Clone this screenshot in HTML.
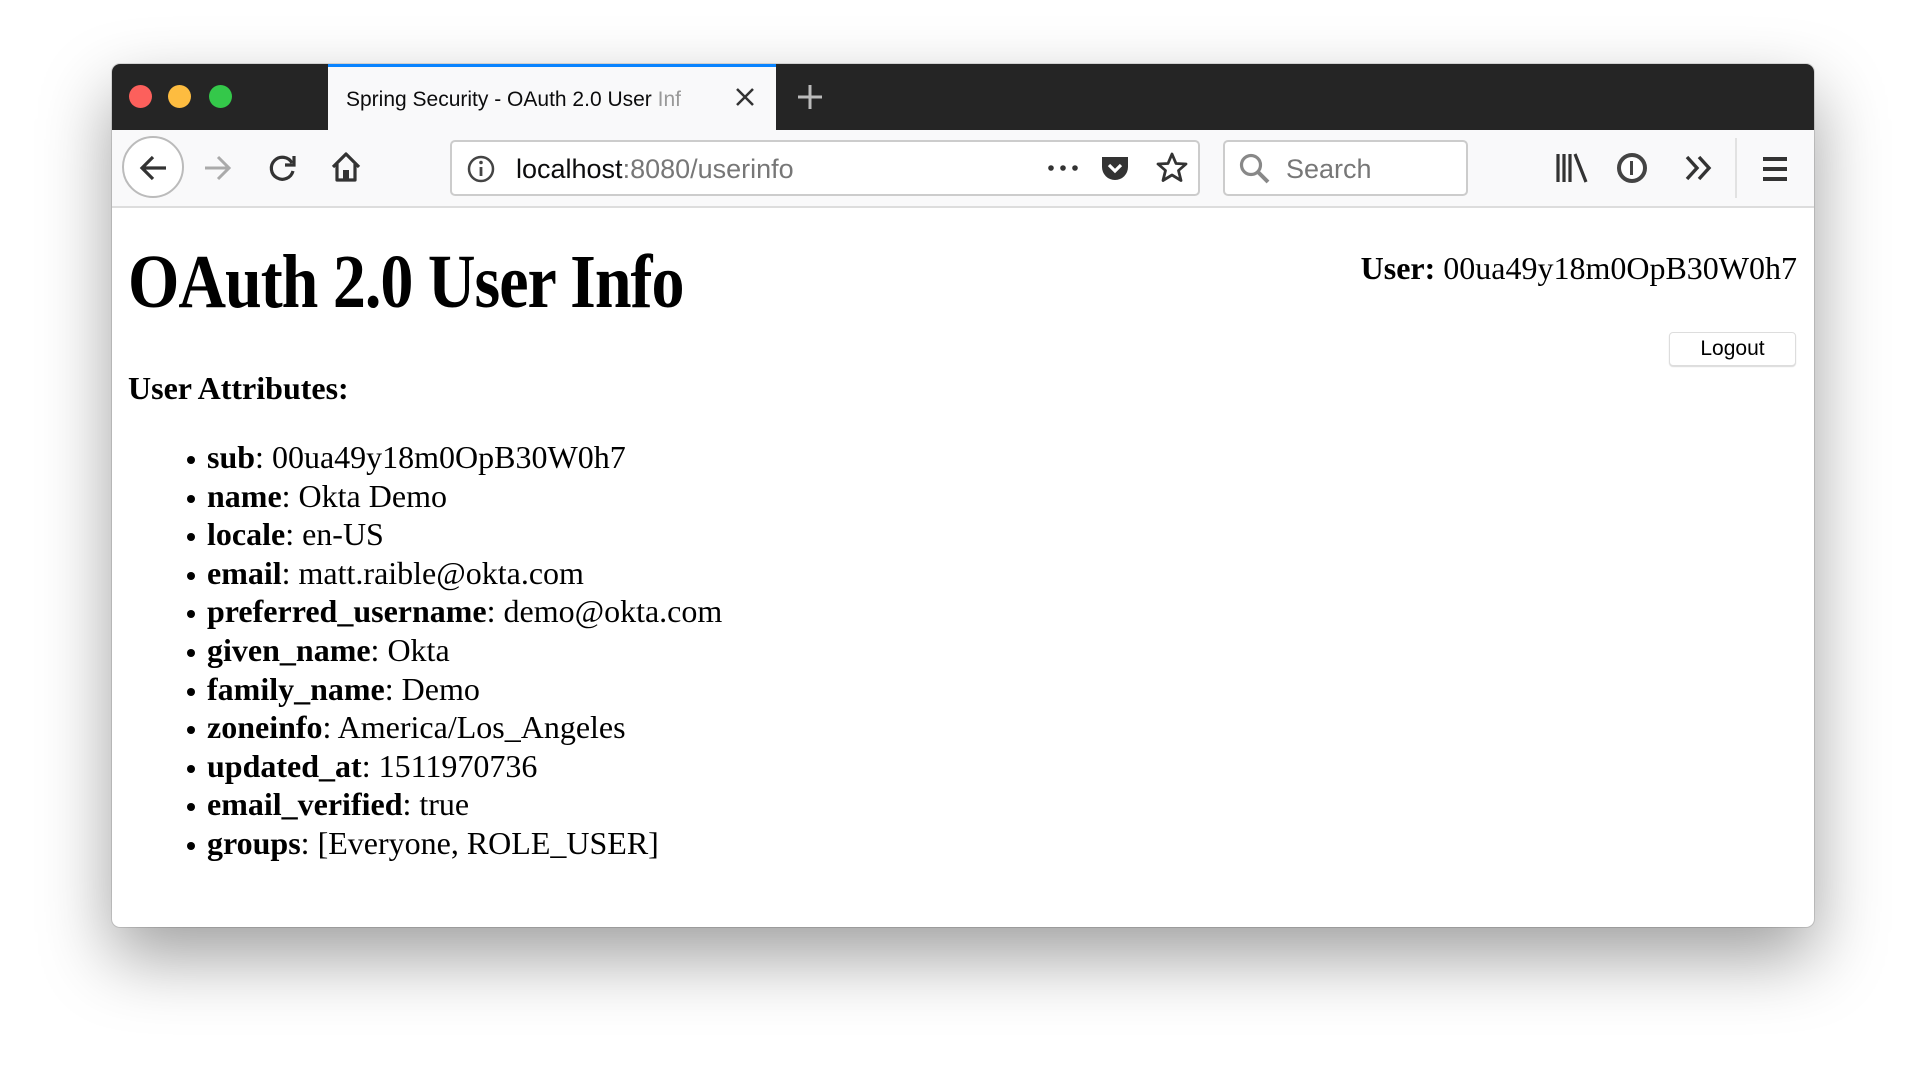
<!DOCTYPE html>
<html><head><meta charset="utf-8"><style>
html,body{margin:0;padding:0;width:1926px;height:1088px;background:#fff;overflow:hidden;position:relative;font-family:"Liberation Sans",sans-serif}
.win{position:absolute;left:112px;top:64px;width:1702px;height:863px;border-radius:8px;background:#fff;box-shadow:0 30px 70px rgba(0,0,0,.38),0 0 0 1px rgba(0,0,0,.12);overflow:hidden}
.title{position:absolute;left:0;top:0;width:100%;height:66px;background:#252525}
.dot{position:absolute;top:21px;width:23px;height:23px;border-radius:50%}
.tab{position:absolute;left:216px;top:0;width:448px;height:66px;background:#f9f9fa;border-top:3px solid #0a84ff;box-sizing:border-box}
.tb{position:absolute;left:0;top:66px;width:100%;height:76px;background:#f9f9fa;border-bottom:2px solid #ddd}
.abs{position:absolute}
.serif{font-family:"Liberation Serif",serif;color:#000}
.li{position:absolute;left:95px;font-size:32px;line-height:38px;white-space:nowrap;font-family:"Liberation Serif",serif}
.li:before{content:"";position:absolute;left:-20px;top:18px;width:8px;height:8px;border-radius:50%;background:#000}
</style></head><body>
<div class="win">
 <div class="title">
  <div class="dot" style="left:17px;background:#fc605c"></div>
  <div class="dot" style="left:56px;background:#fdbc40"></div>
  <div class="dot" style="left:97px;background:#34c84a"></div>
  <div class="tab">
   <div class="abs" style="left:18px;top:21px;font-size:21px;color:#0c0c0d;white-space:nowrap;width:380px;overflow:hidden">Spring Security - OAuth 2.0 User <span style="color:#999">Inf</span></div>
   <svg class="abs" style="left:406px;top:19px" width="22" height="22"><path d="M3 3L19 19M19 3L3 19" stroke="#333" stroke-width="2.5"/></svg>
  </div>
  <svg class="abs" style="left:684px;top:19px" width="28" height="28"><path d="M14 2V26M2 14H26" stroke="#bbb" stroke-width="3"/></svg>
 </div>
 <div class="tb">
  <div class="abs" style="left:10px;top:6px;width:62px;height:62px;border-radius:50%;border:2px solid #bbb;background:#fff;box-sizing:border-box"></div>
  <svg class="abs" style="left:26px;top:22px" width="32" height="32"><path d="M28 16H5M15 5L4 16L15 27" stroke="#333" stroke-width="3.2" fill="none"/></svg>
  <svg class="abs" style="left:89px;top:22px" width="32" height="32"><path d="M4 16H27M17 5L28 16L17 27" stroke="#aaa" stroke-width="3" fill="none"/></svg>
  <svg class="abs" style="left:155px;top:22px" width="32" height="32"><path d="M25 11A11 11 0 1 0 26 19" stroke="#333" stroke-width="3.2" fill="none"/><path d="M27 4V13H18" stroke="#333" stroke-width="3.2" fill="none"/></svg>
  <svg class="abs" style="left:217px;top:20px" width="34" height="34"><path d="M4 17L17 4L30 17M8 14V30H26V14" stroke="#333" stroke-width="3.2" fill="none" stroke-linejoin="round"/><rect x="14" y="20" width="6" height="10" fill="#333"/></svg>
  <div class="abs" style="left:338px;top:10px;width:750px;height:56px;border:2px solid #ccc;border-radius:5px;background:#fff;box-sizing:border-box"></div>
  <svg class="abs" style="left:354px;top:24px" width="30" height="30"><circle cx="15" cy="15" r="12" stroke="#444" stroke-width="2.5" fill="none"/><path d="M15 13V22" stroke="#444" stroke-width="2.8"/><circle cx="15" cy="8.5" r="1.8" fill="#444"/></svg>
  <div class="abs" style="left:404px;top:24px;font-size:27px;color:#0c0c0d;white-space:nowrap">localhost<span style="color:#777">:8080/userinfo</span></div>
  <svg class="abs" style="left:934px;top:31px" width="34" height="14"><circle cx="5" cy="7" r="2.8" fill="#333"/><circle cx="17" cy="7" r="2.8" fill="#333"/><circle cx="29" cy="7" r="2.8" fill="#333"/></svg>
  <svg class="abs" style="left:987px;top:23px" width="32" height="32"><path d="M3 4H29V14A13 13 0 0 1 3 14Z" fill="#333"/><path d="M10 12L16 18L22 12" stroke="#fff" stroke-width="3.2" fill="none"/></svg>
  <svg class="abs" style="left:1043px;top:21px" width="34" height="34"><path d="M17 3L21 12.5L31 13L23.5 19.5L26 29.5L17 24L8 29.5L10.5 19.5L3 13L13 12.5Z" stroke="#333" stroke-width="2.8" fill="none" stroke-linejoin="round"/></svg>
  <div class="abs" style="left:1111px;top:10px;width:245px;height:56px;border:2px solid #ccc;border-radius:5px;background:#fff;box-sizing:border-box"></div>
  <svg class="abs" style="left:1126px;top:22px" width="34" height="34"><circle cx="13" cy="13" r="9.5" stroke="#888" stroke-width="3.2" fill="none"/><path d="M20 20L30 30" stroke="#888" stroke-width="4"/></svg>
  <div class="abs" style="left:1174px;top:24px;font-size:27px;color:#777">Search</div>
  <svg class="abs" style="left:1443px;top:21px" width="34" height="34"><path d="M3 3V31M9 3V31M15 3V31M20 3L31 31" stroke="#333" stroke-width="3.2"/></svg>
  <svg class="abs" style="left:1503px;top:21px" width="34" height="34"><circle cx="17" cy="17" r="13" stroke="#444" stroke-width="4" fill="#fff"/><path d="M15 10H18V24H15Z" fill="#444"/></svg>
  <svg class="abs" style="left:1571px;top:23px" width="32" height="30"><path d="M4 4L14 15L4 26M16 4L26 15L16 26" stroke="#333" stroke-width="3.4" fill="none"/></svg>
  <div class="abs" style="left:1623px;top:8px;width:2px;height:60px;background:#e2e2e2"></div>
  <svg class="abs" style="left:1648px;top:25px" width="30" height="28"><path d="M3 4H27M3 14H27M3 24H27" stroke="#333" stroke-width="4"/></svg>
 </div>
 <div class="abs serif" style="left:16px;top:184px;font-size:66px;line-height:76px;font-weight:bold;letter-spacing:-1px;white-space:nowrap;transform:scale(1,1.15);transform-origin:0 60px">OAuth 2.0 User Info</div>
 <div class="abs serif" style="right:17px;top:185px;font-size:32px;line-height:38px;white-space:nowrap"><b>User:</b> 00ua49y18m0OpB30W0h7</div>
 <div class="abs" style="left:1557px;top:268px;width:125px;height:32px;border:1px solid #ddd;border-radius:4px;background:#fff;box-shadow:0 1px 1px rgba(0,0,0,.15);font-size:21px;line-height:31px;text-align:center;color:#000">Logout</div>
 <div class="abs serif" style="left:16px;top:305px;font-size:32px;line-height:38px;font-weight:bold;white-space:nowrap">User Attributes:</div>
 <div class="li" style="top:374px"><b>sub</b>: 00ua49y18m0OpB30W0h7</div>
 <div class="li" style="top:413px"><b>name</b>: Okta Demo</div>
 <div class="li" style="top:451px"><b>locale</b>: en-US</div>
 <div class="li" style="top:490px"><b>email</b>: matt.raible@okta.com</div>
 <div class="li" style="top:528px"><b>preferred_username</b>: demo@okta.com</div>
 <div class="li" style="top:567px"><b>given_name</b>: Okta</div>
 <div class="li" style="top:606px"><b>family_name</b>: Demo</div>
 <div class="li" style="top:644px"><b>zoneinfo</b>: America/Los_Angeles</div>
 <div class="li" style="top:683px"><b>updated_at</b>: 1511970736</div>
 <div class="li" style="top:721px"><b>email_verified</b>: true</div>
 <div class="li" style="top:760px"><b>groups</b>: [Everyone, ROLE_USER]</div>
</div>
</body></html>
